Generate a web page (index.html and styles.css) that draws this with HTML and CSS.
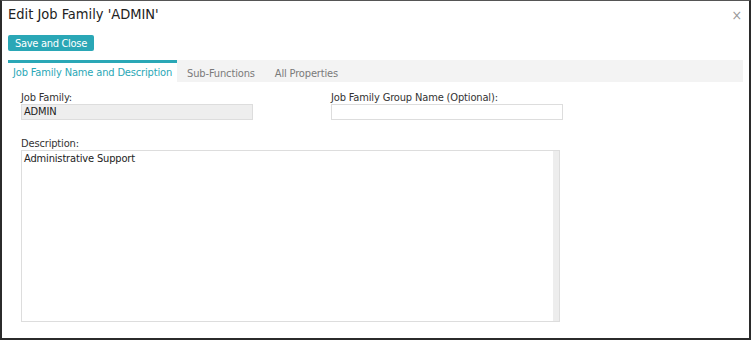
FILE: index.html
```html
<!DOCTYPE html>
<html lang="en">
<head>
    <meta charset="UTF-8">
    <title>Edit Job Family</title>
    <link rel="stylesheet" href="styles.css">
</head>
<body>
    <div class="dialog">
        <div class="dialog-header">
            <h1>Edit Job Family 'ADMIN'</h1>
            <span class="close">&times;</span>
        </div>

        <div class="toolbar">
            <button class="btn-primary">Save and Close</button>
        </div>

        <ul class="tabs">
            <li class="active">Job Family Name and Description</li>
            <li>Sub-Functions</li>
            <li>All Properties</li>
        </ul>

        <div class="tab-body">
            <div class="row">
                <div class="field">
                    <label>Job Family:</label>
                    <div class="input readonly">ADMIN</div>
                </div>
                <div class="field">
                    <label>Job Family Group Name (Optional):</label>
                    <div class="input"></div>
                </div>
            </div>

            <div class="field desc">
                <label>Description:</label>
                <div class="textarea">
                    <div class="text">Administrative Support</div>
                    <div class="scroll"></div>
                </div>
            </div>
        </div>
    </div>
</body>
</html>
```

FILE: styles.css
```css
* {
    box-sizing: border-box;
    margin: 0;
    padding: 0;
}

body {
    font-family: "DejaVu Sans Condensed", "DejaVu Sans", sans-serif;
    font-size: 11px;
    letter-spacing: -0.15px;
    color: #222;
    background: #fff;
}

.dialog {
    width: 751px;
    height: 340px;
    border: 2px solid #2b2b2b;
    border-top: 1px solid #555;
    padding: 0 6px;
}

.dialog-header {
    display: flex;
    justify-content: space-between;
    align-items: flex-start;
    height: 34px;
    padding-top: 5px;
}

.dialog-header h1 {
    font-size: 14.5px;
    font-weight: normal;
    letter-spacing: 0;
    color: #222;
}

.close {
    color: #999;
    font-size: 14px;
    line-height: 1;
    margin-top: 2px;
    margin-right: 1px;
}

.toolbar {
    height: 25px;
}

.btn-primary {
    background: #2aa7b6;
    color: #fff;
    border: none;
    border-radius: 2px;
    font-family: inherit;
    font-size: 11px;
    letter-spacing: -0.3px;
    height: 16px;
    padding: 0 7px;
}

.tabs {
    list-style: none;
    display: flex;
    background: #f3f3f3;
    height: 22px;
}

.tabs li {
    padding: 4px 10px 0 10px;
    color: #7a7a7a;
    border-top: 3px solid transparent;
}

.tabs li.active {
    background: #fff;
    color: #2aa7b6;
    border-top-color: #2aa7b6;
    padding: 3px 5px 0 5px;
}

.tab-body {
    padding: 9px 13px 0 13px;
}

.row {
    display: flex;
    gap: 78px;
}

.field label {
    display: block;
    color: #333;
    height: 13px;
}

.input {
    width: 232px;
    height: 16px;
    border: 1px solid #ddd;
    padding-left: 2px;
    line-height: 14px;
}

.input.readonly {
    background: #eee;
}

.desc {
    margin-top: 17px;
}

.desc label {
    height: 13px;
}

.textarea {
    display: flex;
    width: 539px;
    height: 172px;
    border: 1px solid #ddd;
}

.textarea .text {
    flex: 1;
    padding: 1px 2px;
}

.textarea .scroll {
    width: 6px;
    background: #ededed;
}
```
